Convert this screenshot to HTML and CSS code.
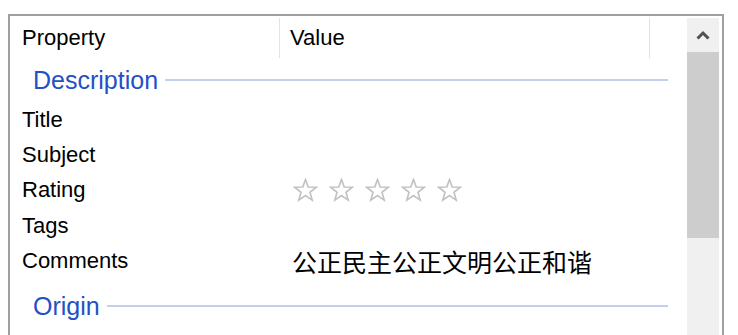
FILE: index.html
```html
<!DOCTYPE html>
<html lang="en">
<head>
<meta charset="UTF-8">
<title>Properties</title>
<link rel="stylesheet" href="styles.css">
</head>
<body>
<div class="panel">
  <div class="list">
    <div class="list-header">
      <div class="col col-name">Property</div>
      <div class="col col-value">Value</div>
    </div>
    <div class="group"><span class="group-title">Description</span><span class="group-line"></span></div>
    <div class="rows">
      <div class="row"><div class="cell-name">Title</div><div class="cell-value"></div></div>
      <div class="row"><div class="cell-name">Subject</div><div class="cell-value"></div></div>
      <div class="row">
        <div class="cell-name">Rating</div>
        <div class="cell-value stars">
          <svg class="star" viewBox="0 0 24 24"><polygon points="12,1.5 14.6,8.6 22.3,8.9 16.3,13.7 18.4,21.2 12,16.9 5.6,21.2 7.7,13.7 1.7,8.9 9.4,8.6"/></svg>
          <svg class="star" viewBox="0 0 24 24"><polygon points="12,1.5 14.6,8.6 22.3,8.9 16.3,13.7 18.4,21.2 12,16.9 5.6,21.2 7.7,13.7 1.7,8.9 9.4,8.6"/></svg>
          <svg class="star" viewBox="0 0 24 24"><polygon points="12,1.5 14.6,8.6 22.3,8.9 16.3,13.7 18.4,21.2 12,16.9 5.6,21.2 7.7,13.7 1.7,8.9 9.4,8.6"/></svg>
          <svg class="star" viewBox="0 0 24 24"><polygon points="12,1.5 14.6,8.6 22.3,8.9 16.3,13.7 18.4,21.2 12,16.9 5.6,21.2 7.7,13.7 1.7,8.9 9.4,8.6"/></svg>
          <svg class="star" viewBox="0 0 24 24"><polygon points="12,1.5 14.6,8.6 22.3,8.9 16.3,13.7 18.4,21.2 12,16.9 5.6,21.2 7.7,13.7 1.7,8.9 9.4,8.6"/></svg>
        </div>
      </div>
      <div class="row"><div class="cell-name">Tags</div><div class="cell-value"></div></div>
      <div class="row"><div class="cell-name">Comments</div><div class="cell-value cjk">公正民主公正文明公正和谐</div></div>
    </div>
    <div class="group"><span class="group-title">Origin</span><span class="group-line"></span></div>
  </div>
  <div class="scrollbar">
    <div class="scroll-btn">
      <svg viewBox="0 0 16 10" width="16" height="10"><polyline points="2.5,8.5 8,3 13.5,8.5"/></svg>
    </div>
    <div class="scroll-thumb"></div>
    <div class="scroll-track"></div>
  </div>
</div>
</body>
</html>
```

FILE: styles.css
```css
html, body {
  margin: 0;
  height: 100%;
  overflow: hidden;
  background-color: #fff;
}
body {
  padding: 14px 0 0 8px;
  box-sizing: border-box;
  font-family: 'Liberation Sans', Arial, sans-serif;
  color: #000;
}
.panel {
  width: 716px;
  height: 321px;
  box-sizing: border-box;
  border: 2px solid #a0a0a0;
  border-bottom: none;
  padding: 2px 3px 0 0;
  display: flex;
  overflow: hidden;
}
.list {
  flex: 1;
  display: flex;
  flex-direction: column;
}
.list-header {
  display: flex;
  flex-shrink: 0;
  height: 40px;
  font-size: 22px;
}
.col {
  display: flex;
  align-items: center;
  border-right: 1px solid #e3e3e3;
  box-sizing: border-box;
}
.col-name {
  width: 270px;
  padding-left: 12px;
}
.col-value {
  width: 370px;
  padding-left: 10px;
}
.group {
  display: flex;
  flex-shrink: 0;
  align-items: center;
  height: 44px;
  padding-left: 23px;
  margin-right: 19px;
}
.group-title {
  font-size: 25px;
  color: #2350c6;
}
.group-line {
  flex: 1;
  height: 2px;
  margin-left: 7px;
  background-color: #c3d0ec;
}
.rows {
  flex-shrink: 0;
  padding-bottom: 6px;
}
.row {
  display: flex;
  align-items: center;
  height: 35.3px;
  font-size: 22px;
}
.cell-name {
  width: 270px;
  padding-left: 12px;
  box-sizing: border-box;
}
.cell-value {
  padding-left: 12px;
}
.stars {
  display: flex;
  gap: 11px;
  padding-left: 13px;
}
.star {
  width: 25px;
  height: 25px;
  fill: none;
  stroke: #c2c2c2;
  stroke-width: 1.6;
}
.cjk {
  font-family: 'Noto Sans CJK SC', sans-serif;
  font-size: 25px;
}
.scrollbar {
  width: 32px;
  display: flex;
  flex-direction: column;
  background-color: #f0f0f0;
}
.scroll-btn {
  height: 34px;
  display: flex;
  align-items: center;
  justify-content: center;
}
.scroll-btn polyline {
  fill: none;
  stroke: #505050;
  stroke-width: 3;
}
.scroll-thumb {
  height: 186px;
  background-color: #cdcdcd;
}
.scroll-track {
  flex: 1;
}
```
